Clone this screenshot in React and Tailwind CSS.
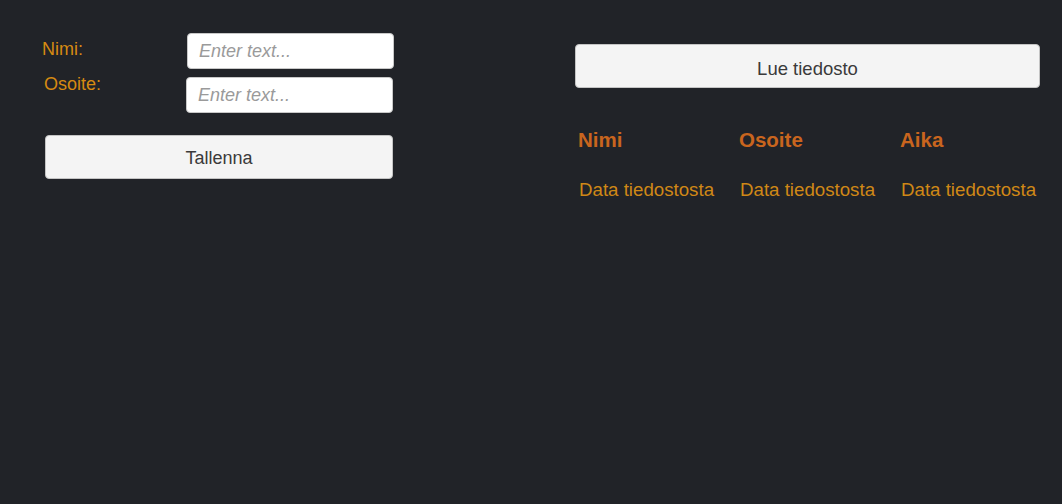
export default function App() {
  const font = { fontFamily: '"Liberation Sans", Arial, sans-serif' };
  return (
    <div className="flex h-[504px] w-[1062px] bg-[#212328]" style={font}>
      {/* Left form */}
      <div className="flex w-[575px] flex-col pl-[42px] pt-[33px]">
        <div className="flex items-start">
          <label className="mt-[5px] w-[145px] text-[18px] leading-[22px] text-[#d68a12]">Nimi:</label>
          <input
            placeholder="Enter text..."
            className="h-[36px] w-[207px] rounded-[4px] border border-[#c8c8c8] bg-white pl-[11px] pr-[12px] text-[18px] text-[#333] italic outline-none placeholder:text-[#9a9a9a]"
          />
        </div>
        <div className="mt-[8px] flex items-start">
          <label className="ml-[2px] mt-[-4px] w-[142px] text-[18px] leading-[22px] text-[#d68a12]">Osoite:</label>
          <input
            placeholder="Enter text..."
            className="h-[36px] w-[207px] rounded-[4px] border border-[#c8c8c8] bg-white pl-[11px] pr-[12px] text-[18px] text-[#333] italic outline-none placeholder:text-[#9a9a9a]"
          />
        </div>
        <button className="ml-[3px] mt-[22px] flex h-[44px] w-[348px] items-center justify-center rounded-[4px] border border-[#c4c4c4] bg-[#f4f4f4] pt-[3px] text-[18px] text-[#3a3a3a]">
          Tallenna
        </button>
      </div>

      {/* Right */}
      <div className="flex w-[465px] flex-col pt-[44px]">
        <button className="flex h-[44px] w-[465px] items-center justify-center rounded-[4px] border border-[#c4c4c4] bg-[#f4f4f4] pt-[6px] text-[18.5px] text-[#3a3a3a]">
          Lue tiedosto
        </button>
        <div className="mt-[40px] grid grid-cols-[161px_161px_161px] pl-[3px]">
          <div className="text-[20.5px] font-bold leading-[24px] text-[#c9651e]">Nimi</div>
          <div className="text-[20.5px] font-bold leading-[24px] text-[#c9651e]">Osoite</div>
          <div className="text-[20.5px] font-bold leading-[24px] text-[#c9651e]">Aika</div>
        </div>
        <div className="mt-[27px] grid grid-cols-[161px_161px_161px] pl-[4px]">
          <div className="whitespace-nowrap text-[18.7px] leading-[22px] text-[#d08816]">Data tiedostosta</div>
          <div className="whitespace-nowrap text-[18.7px] leading-[22px] text-[#d08816]">Data tiedostosta</div>
          <div className="whitespace-nowrap text-[18.7px] leading-[22px] text-[#d08816]">Data tiedostosta</div>
        </div>
      </div>
    </div>
  );
}
